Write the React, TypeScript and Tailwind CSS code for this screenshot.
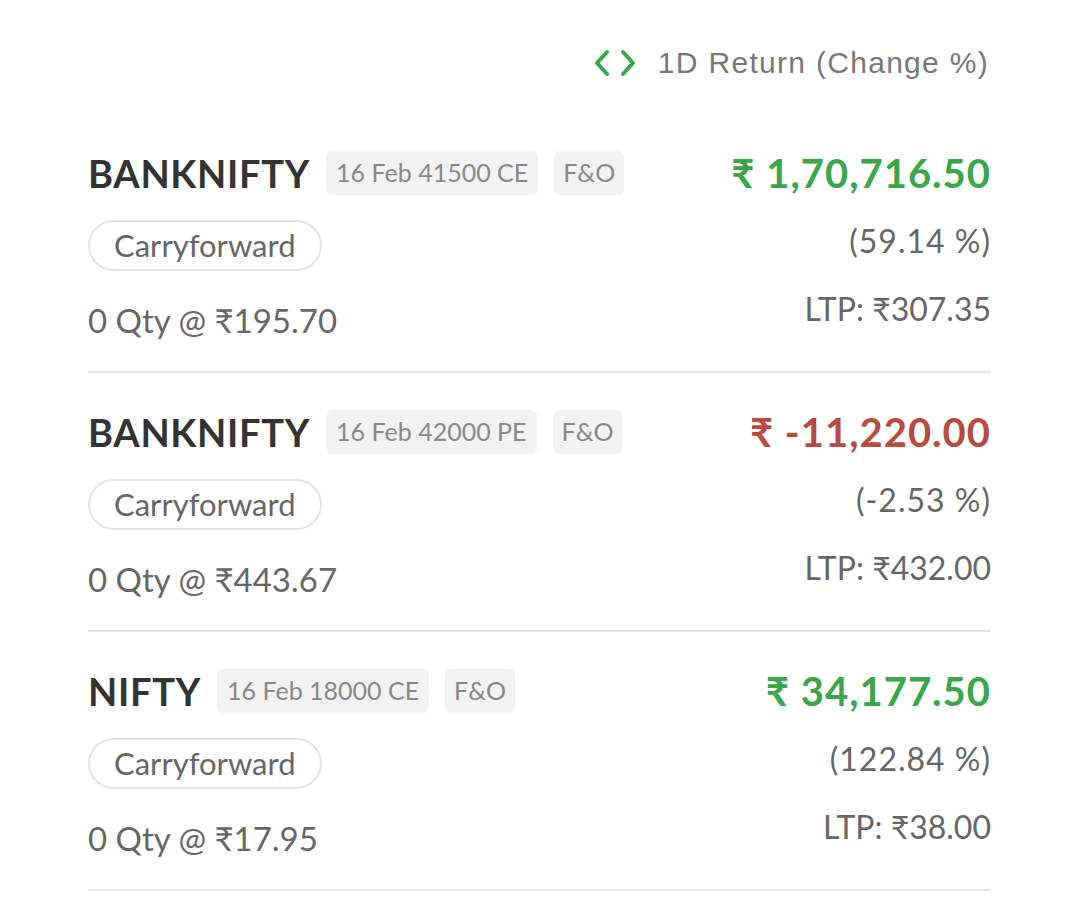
import React from 'react';

type Position = {
  symbol: string;
  contract: string;
  amount: string;
  gain: boolean;
  pct: string;
  qty: string;
  ltp: string;
};

const positions: Position[] = [
  { symbol: 'BANKNIFTY', contract: '16 Feb 41500 CE', amount: '₹ 1,70,716.50', gain: true, pct: '(59.14 %)', qty: '0 Qty @ ₹195.70', ltp: 'LTP: ₹307.35' },
  { symbol: 'BANKNIFTY', contract: '16 Feb 42000 PE', amount: '₹ -11,220.00', gain: false, pct: '(-2.53 %)', qty: '0 Qty @ ₹443.67', ltp: 'LTP: ₹432.00' },
  { symbol: 'NIFTY', contract: '16 Feb 18000 CE', amount: '₹ 34,177.50', gain: true, pct: '(122.84 %)', qty: '0 Qty @ ₹17.95', ltp: 'LTP: ₹38.00' },
];

const Row = ({ p }: { p: Position }) => (
  <div className="flex justify-between border-b-2 border-[#e6e6e6] pt-[37px] pb-[33px]">
    <div className="flex flex-col">
      <div className="flex items-center h-[44px]">
        <span className="text-[38px] font-bold text-[#333] tracking-[0.7px]">{p.symbol}</span>
        <span className="ml-4 h-[44px] px-[10px] flex items-center rounded-md bg-[#f2f2f2] text-[25px] text-[#888]">
          {p.contract}
        </span>
        <span className="ml-4 h-[44px] px-[9px] flex items-center rounded-md bg-[#f2f2f2] text-[25px] text-[#888]">
          F&amp;O
        </span>
      </div>
      <div className="mt-[25px] self-start h-[51px] px-[24px] flex items-center rounded-full border-2 border-[#e4e4e4] text-[31px] text-[#666]">
        Carryforward
      </div>
      <div className="mt-[31px] h-[36px] leading-[36px] text-[33px] text-[#666]">{p.qty}</div>
    </div>
    <div className="flex flex-col items-end">
      <div className={`h-[44px] leading-[44px] text-[40px] font-bold tracking-[1px] ${p.gain ? 'text-[#3aa54a]' : 'text-[#b84a40]'}`}>
        {p.amount}
      </div>
      <div className="mt-[28px] h-[36px] leading-[36px] text-[32px] tracking-[1px] text-[#666]">{p.pct}</div>
      <div className="mt-[32px] h-[36px] leading-[36px] text-[32px] text-[#666]">{p.ltp}</div>
    </div>
  </div>
);

export default function App() {
  return (
    <div className="w-[1079px] h-[908px] overflow-hidden bg-white px-[88px] font-['Lato','Noto_Sans',sans-serif]">
      <div className="h-[114px] flex items-start justify-end pt-[44px] pr-[2px]">
        <div className="flex items-center gap-[22px]">
          <svg width="42" height="28" viewBox="0 0 42 28" fill="none" stroke="#3aa54a" strokeWidth="4" strokeLinecap="round" strokeLinejoin="round">
            <path d="M13 3 L3 14 L13 25" />
            <path d="M29 3 L39 14 L29 25" />
          </svg>
          <span className="text-[30px] tracking-[1.3px] text-[#777] font-['Liberation_Sans',sans-serif] leading-[38px]">1D Return (Change %)</span>
        </div>
      </div>
      {positions.map((p, i) => (
        <Row key={i} p={p} />
      ))}
    </div>
  );
}
